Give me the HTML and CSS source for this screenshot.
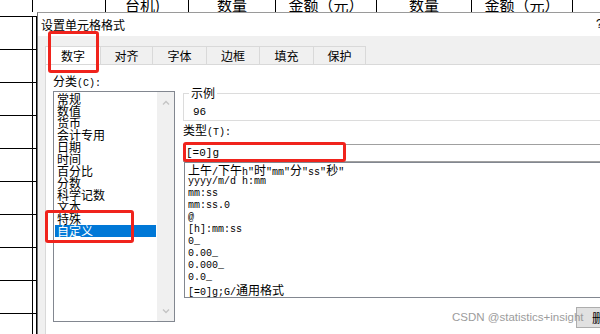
FILE: index.html
```html
<!DOCTYPE html>
<html lang="zh-CN">
<head>
    <meta charset="UTF-8">
    <meta name="viewport" content="width=device-width, initial-scale=1.0">
    <link rel="stylesheet" href="styles.css">
</head>
<body>

<div class="sheet-head">
    <div class="hcell w1"></div>
    <div class="hcell w2"></div>
    <div class="hcell w3 left"><span>台机)</span></div>
    <div class="hcell w4"><span>数量</span></div>
    <div class="hcell w5"><span>金额（元）</span></div>
    <div class="hcell w6"><span>数量</span></div>
    <div class="hcell w7"><span>金额（元）</span></div>
    <div class="hcell w8"></div>
</div>

<div class="sheet-side">
    <div class="srow"><div class="sa"></div><div class="sb"></div></div>
    <div class="srow"><div class="sa"></div><div class="sb"></div></div>
    <div class="srow"><div class="sa"></div><div class="sb"></div></div>
    <div class="srow"><div class="sa"></div><div class="sb"></div></div>
    <div class="srow"><div class="sa"></div><div class="sb"></div></div>
    <div class="srow"><div class="sa"></div><div class="sb"></div></div>
    <div class="srow"><div class="sa"></div><div class="sb"></div></div>
    <div class="srow"><div class="sa"></div><div class="sb"></div></div>
    <div class="srow"><div class="sa"></div><div class="sb"></div></div>
    <div class="srow"><div class="sa"></div><div class="sb"></div></div>
</div>

<!-- format cells dialog -->
<div class="dialog">
    <div class="titlebar">
        <span>设置单元格格式</span>
        <span class="help">?</span>
    </div>

    <div class="tabstrip">
        <div class="tab active t1">数字</div>
        <div class="tab t2">对齐</div>
        <div class="tab t3">字体</div>
        <div class="tab t4">边框</div>
        <div class="tab t5">填充</div>
        <div class="tab t6 last">保护</div>
    </div>

    <div class="page">
        <div class="col-left">
            <div class="label">分类<span class="mono">(C):</span></div>
            <div class="listbox">
                <div class="items">
                    <div class="item">常规</div>
                    <div class="item">数值</div>
                    <div class="item">货币</div>
                    <div class="item">会计专用</div>
                    <div class="item">日期</div>
                    <div class="item">时间</div>
                    <div class="item">百分比</div>
                    <div class="item">分数</div>
                    <div class="item">科学记数</div>
                    <div class="item">文本</div>
                    <div class="item">特殊</div>
                    <div class="item selected">自定义</div>
                </div>
                <div class="scrollbar">
                    <svg width="8" height="5" viewBox="0 0 8 5"><path d="M1 4.5 L4 1.5 L7 4.5" fill="none" stroke="#c4c4c4" stroke-width="1.4"/></svg>
                    <svg width="8" height="5" viewBox="0 0 8 5"><path d="M1 0.5 L4 3.5 L7 0.5" fill="none" stroke="#c4c4c4" stroke-width="1.4"/></svg>
                </div>
            </div>
        </div>

        <div class="col-right">
            <div class="sample">
                <span class="sample-title">示例</span>
                <div class="sample-value mono">96</div>
            </div>

            <div class="label type-label">类型<span class="mono">(T):</span></div>
            <div class="type-input mono">[=0]g</div>

            <div class="typelist">
                <div class="code"><span class="cj">上午</span>/<span class="cj">下午</span>h"<span class="cj">时</span>"mm"<span class="cj">分</span>"ss"<span class="cj">秒</span>"</div>
                <div class="code">yyyy/m/d h:mm</div>
                <div class="code">mm:ss</div>
                <div class="code">mm:ss.0</div>
                <div class="code">@</div>
                <div class="code">[h]:mm:ss</div>
                <div class="code">0_</div>
                <div class="code">0.00_</div>
                <div class="code">0.000_</div>
                <div class="code">0.0_</div>
                <div class="code">[=0]g;G/<span class="cj">通用格式</span></div>
            </div>

            <div class="buttons">
                <div class="btn">删除</div>
            </div>
        </div>
    </div>
</div>

<div class="watermark">CSDN @statistics+insight</div>

<!-- red annotation boxes -->
<div class="mark mark-tab"></div>
<div class="mark mark-cat"></div>
<div class="mark mark-type"></div>

</body>
</html>
```

FILE: styles.css
```css
body {
    margin: 0;
    width: 600px;
    height: 334px;
    overflow: hidden;
    position: relative;
    background-color: #fff;
    color: #000;
    font-family: "Noto Sans CJK SC", "Liberation Sans", sans-serif;
    font-size: 12px;
}

/* spreadsheet behind the dialog */
.sheet-head {
    display: flex;
    height: 12px;
    overflow: hidden;
}

.hcell {
    box-sizing: border-box;
    height: 12px;
    border-right: 1px solid #000;
    display: flex;
    align-items: flex-end;
    justify-content: center;
    font-size: 15px;
    line-height: 15px;
    flex-shrink: 0;
}

.hcell.left {
    justify-content: flex-start;
    padding-left: 19px;
}

.w1 { width: 33px; }
.w2 { width: 73px; }
.w3 { width: 83px; }
.w4 { width: 87px; }
.w5 { width: 101px; }
.w6 { width: 95px; }
.w7 { width: 101px; }
.w8 { flex: 1; border-right: none; }

.sheet-side {
    padding-top: 4px;
    width: 37px;
}

.srow {
    display: flex;
    height: 33px;
    border-top: 1px solid #000;
    box-sizing: border-box;
}

.sa {
    width: 33px;
    box-sizing: border-box;
    border-right: 1px solid #000;
}

.sb {
    width: 4px;
    box-sizing: border-box;
    border-right: 1px solid #000;
}

/* dialog */
.dialog {
    position: absolute;
    left: 37px;
    top: 12px;
    width: 640px;
    height: 322px;
    overflow: hidden;
    background-color: #f0f0f0;
    border-top: 1px solid #9a9a9a;
    border-left: 1px solid #707070;
}

.titlebar {
    display: flex;
    height: 23px;
    line-height: 23px;
    padding-left: 3px;
    background-color: #fff;
}

.help {
    margin-left: 471px;
    font-family: "Liberation Sans", sans-serif;
}

.tabstrip {
    display: flex;
    align-items: flex-end;
    height: 28px;
    padding-left: 7px;
    box-sizing: border-box;
}

.tab {
    box-sizing: border-box;
    height: 18px;
    line-height: 17px;
    text-align: center;
    border-top: 1px solid #d9d9d9;
    border-left: 1px solid #d9d9d9;
}

.tab.last {
    border-right: 1px solid #d9d9d9;
}

.tab.active {
    background-color: #fff;
}

.t1 { width: 55px; }
.t2 { width: 52px; }
.t3 { width: 54px; }
.t4 { width: 53px; }
.t5 { width: 54px; }
.t6 { width: 53px; }

.page {
    display: flex;
    gap: 8px;
    align-items: flex-start;
    margin-left: 7px;
    height: 280px;
    padding-left: 7px;
    background-color: #fff;
    border-top: 1px solid #d9d9d9;
    border-left: 1px solid #d9d9d9;
}

.label {
    line-height: 12px;
}

.mono {
    font-family: "Liberation Mono", monospace;
    font-size: 10px;
}

.col-left {
    width: 122px;
    flex-shrink: 0;
}

.col-left .label {
    margin-top: 10px;
}

.listbox {
    display: flex;
    margin-top: 1px;
    height: 231px;
    box-sizing: border-box;
    border: 1px solid #828790;
}

.items {
    width: 103px;
    padding: 1px 1px 0 1px;
    box-sizing: border-box;
}

.item {
    line-height: 12px;
    height: 12px;
    padding-left: 2px;
}

.item.selected {
    background-color: #0078d7;
    color: #fff;
}

.scrollbar {
    width: 17px;
    background-color: #f0f0f0;
    display: flex;
    flex-direction: column;
    align-items: center;
    justify-content: space-between;
    padding: 8px 0 7px;
    box-sizing: border-box;
}

.col-right {
    width: 468px;
    flex-shrink: 0;
    padding-top: 28px;
}

.sample {
    position: relative;
    height: 28px;
    box-sizing: border-box;
    padding: 12px 0 0 9px;
    border: 1px solid #dcdcdc;
}

.sample-title {
    position: absolute;
    left: 5px;
    top: -7px;
    padding: 0 2px;
    line-height: 12px;
    background-color: #fff;
}

.sample-value {
    line-height: 12px;
    font-size: 11px;
}

.type-label {
    margin-top: 3px;
}

.type-input {
    margin-top: 5px;
    height: 18px;
    line-height: 17px;
    box-sizing: border-box;
    padding-left: 2px;
    border: 1px solid #a0a0a0;
    font-size: 11px;
}

.typelist {
    margin-left: 1px;
    padding: 1px 0 1px 3px;
    border: 1px solid #828790;
}

.code {
    height: 12px;
    line-height: 12px;
    font-family: "Liberation Mono", monospace;
    font-size: 10px;
    white-space: nowrap;
}

.cj {
    font-family: "Noto Sans CJK SC", sans-serif;
    font-size: 12px;
}

.buttons {
    display: flex;
    justify-content: flex-end;
    margin-top: 9px;
}

.btn {
    width: 75px;
    height: 21px;
    line-height: 19px;
    box-sizing: border-box;
    padding-left: 15px;
    background-color: #e1e1e1;
    border: 1px solid #adadad;
}

.watermark {
    position: absolute;
    left: 452px;
    top: 311px;
    font-family: "Liberation Sans", sans-serif;
    font-size: 11.5px;
    color: #9c9c9c;
    white-space: nowrap;
}

.mark {
    position: absolute;
    box-sizing: border-box;
    border: 3px solid #f0231c;
    border-radius: 3px;
}

.mark-tab {
    left: 48px;
    top: 31px;
    width: 51px;
    height: 42px;
}

.mark-cat {
    left: 45px;
    top: 210px;
    width: 89px;
    height: 33px;
}

.mark-type {
    left: 183px;
    top: 142px;
    width: 163px;
    height: 20px;
}
```
